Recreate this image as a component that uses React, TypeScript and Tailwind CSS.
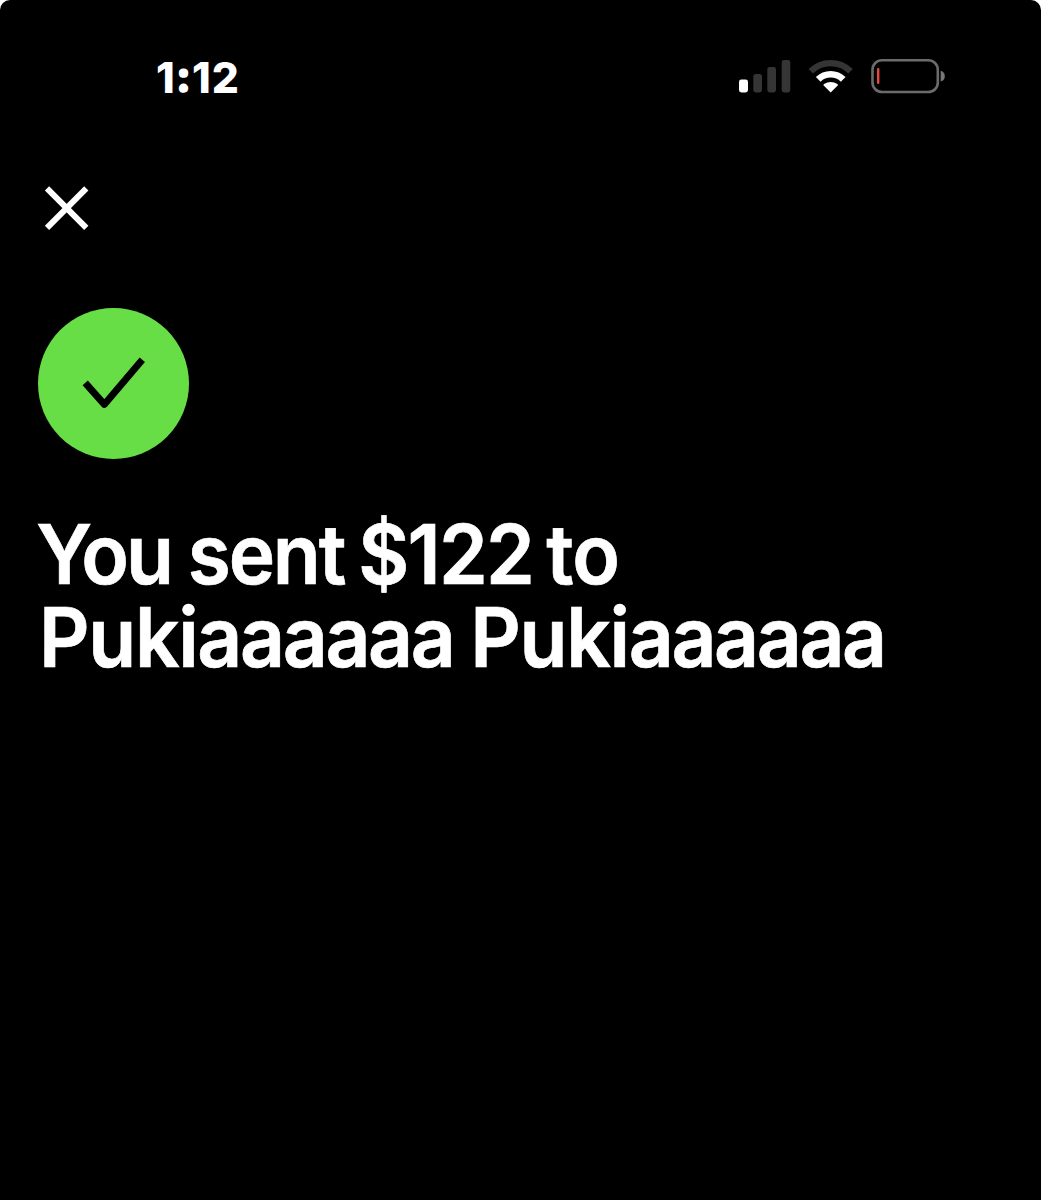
import React from "react";

function StatusBar() {
  return (
    <header className="flex h-[154px] items-start justify-between pl-[156px] pr-[96px] pt-[53px]">
      <time className="h-[50px] whitespace-nowrap text-[42.5px] font-extrabold leading-[50px] tracking-[1.1px]">
        1<span className="relative top-[-1px] [-webkit-text-stroke:1.4px_white]">:</span>12
      </time>
      <div className="flex items-center pt-[5px]">
        <svg className="mr-[17px]" width="53" height="36" viewBox="738 58 53 36" aria-label="Signal">
          <rect x="739" y="79.5" width="9" height="13" rx="2.4" fill="#fff" />
          <rect x="753.3" y="74" width="8.7" height="18.5" rx="2.4" fill="#353535" />
          <rect x="767.3" y="67" width="8.7" height="25.5" rx="2.4" fill="#353535" />
          <rect x="781.7" y="60" width="8.6" height="32.5" rx="2.4" fill="#353535" />
        </svg>
        <svg className="mr-[18px]" width="45" height="36" viewBox="808 58 45 36" aria-label="Wi-Fi">
          <path d="M810.8 71.2A28.4 28.4 0 0 1 850.6 71.2" fill="none" stroke="#353535" strokeWidth="6.3" />
          <path d="M818.2 79.4A17.7 17.7 0 0 1 843.2 79.4" fill="none" stroke="#fff" strokeWidth="6.6" />
          <path d="M830.7 92.4L823.7 85.4Q823.2 84.7 824 84.1Q830.7 79.8 837.4 84.1Q838.2 84.7 837.7 85.4Z" fill="#fff" />
        </svg>
        <svg width="74" height="36" viewBox="871 58 74 36" aria-label="Battery">
          <rect x="872.5" y="60.2" width="65.3" height="31.8" rx="9.5" fill="none" stroke="#6b6b6b" strokeWidth="2.6" />
          <rect x="877" y="68" width="2.4" height="16" rx="1" fill="#e5483f" />
          <path d="M940.7 70.7Q944.8 72 944.8 76.2T940.7 81.5Z" fill="#777" />
        </svg>
      </div>
    </header>
  );
}

function Name() {
  return (
    <>
      <span className="tracking-[-1.4px]">Puki</span>
      <span className="tracking-[-2.45px]">aaaaaa</span>
    </>
  );
}

export default function App() {
  return (
    <div className="h-[1200px] w-[1041px] bg-white">
      <div className="h-full w-full overflow-hidden rounded-t-[10px] bg-black font-['Inter',sans-serif] text-white">
        <StatusBar />
        <main className="flex flex-col items-start pl-[38px]">
          <button aria-label="Close" className="mt-[27px] h-[54px] w-[58px]">
            <svg width="58" height="54" viewBox="38 181 58 54">
              <path d="M47 188.3L86.3 227.8M86.3 188.3L47 227.8" stroke="#fff" strokeWidth="6" />
            </svg>
          </button>
          <div className="mt-[72.5px] flex h-[151.5px] w-[151px] items-center justify-center rounded-full bg-[#67de46]">
            <svg width="151" height="152" viewBox="38 307.5 151 152" aria-label="Sent">
              <path d="M85.2 383.4L104.3 404.9L142.3 360.2" fill="none" stroke="#000" strokeWidth="7" strokeLinejoin="round" />
            </svg>
          </div>
          <h1 className="ml-px mt-[54px] origin-left scale-x-95 whitespace-nowrap text-[82.5px] font-semibold leading-[83px] tracking-[-3px] [-webkit-text-stroke:0.7px_white]">
            <span className="-ml-[3px] block">
              <span className="tracking-[-3.2px]">You</span> <span className="tracking-[-2.3px]">sent</span>
              <span className="tracking-[-6px]"> </span>
              <span className="tracking-[-1.8px]">$122</span>
              <span className="tracking-[-7px]"> </span>
              <span className="tracking-[-1px]">to</span>
            </span>
            <span className="block">
              <Name /> <Name />
            </span>
          </h1>
        </main>
      </div>
    </div>
  );
}
